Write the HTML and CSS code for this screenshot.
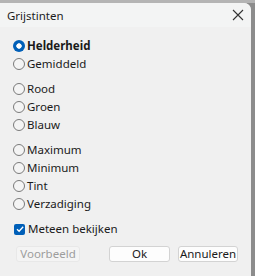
FILE: index.html
```html
<!DOCTYPE html>
<html>
<head>
<meta charset="utf-8">
<link rel="stylesheet" href="styles.css">
</head>
<body>
<div class="window">
  <div class="titlebar">
    <span class="title">Grijstinten</span>
    <svg class="close" width="12" height="12" viewBox="0 0 12 12"><path d="M1 1L11 11M11 1L1 11" stroke="#333" stroke-width="1.1" fill="none"/></svg>
  </div>
  <div class="content">
    <div class="group">
      <label class="opt"><span class="radio on"></span><span class="bold">Helderheid</span></label>
      <label class="opt"><span class="radio"></span>Gemiddeld</label>
    </div>
    <div class="group">
      <label class="opt"><span class="radio"></span>Rood</label>
      <label class="opt"><span class="radio"></span>Groen</label>
      <label class="opt"><span class="radio"></span>Blauw</label>
    </div>
    <div class="group">
      <label class="opt"><span class="radio"></span>Maximum</label>
      <label class="opt"><span class="radio"></span>Minimum</label>
      <label class="opt"><span class="radio"></span>Tint</label>
      <label class="opt"><span class="radio"></span>Verzadiging</label>
    </div>
    <label class="opt check-row"><span class="check"><svg width="10" height="10" viewBox="0 0 10 10"><path d="M2 5.2L4.1 7.3L8.2 2.8" stroke="#fff" stroke-width="1.3" fill="none"/></svg></span>Meteen bekijken</label>
    <div class="buttons">
      <button class="btn disabled">Voorbeeld</button>
      <span class="spacer"></span>
      <button class="btn">Ok</button>
      <button class="btn last">Annuleren</button>
    </div>
  </div>
</div>
</body>
</html>
```
FILE: styles.css
```css
html, body {
  margin: 0;
  padding: 0;
}
body {
  width: 255px;
  height: 276px;
  overflow: hidden;
  font-family: "Noto Sans", "Open Sans", sans-serif;
  font-size: 11.5px;
  color: #1a1a1a;
  padding-top: 3px;
  box-sizing: border-box;
  background: linear-gradient(to bottom, #b4b4b4 0, #b4b4b4 3px, #8c8c8c 3px);
}
.window {
  width: 251px;
  height: 273px;
  background: #f0f0f0;
  border-top-right-radius: 7px;
  overflow: hidden;
}
.titlebar {
  height: 24px;
  display: flex;
  align-items: center;
  justify-content: space-between;
  padding: 0 7px 0 7px;
  background: #f3f4f4;
}
.title {
  font-size: 11.5px;
  color: #1c1c1c;
}
.content {
  padding: 10px 0 0 13px;
}
.group {
  display: flex;
  flex-direction: column;
  margin-bottom: 7px;
}
.opt {
  display: flex;
  align-items: center;
  height: 18px;
  gap: 2px;
  line-height: 18px;
}
.bold {
  font-weight: bold;
}
.radio {
  width: 10px;
  height: 10px;
  border: 1px solid #7a7a7a;
  border-radius: 50%;
  background: #f4f4f4;
  flex: none;
}
.radio.on {
  border: none;
  width: 12px;
  height: 12px;
  background: radial-gradient(circle, #fff 0, #fff 2.4px, #005fb8 3px);
}
.check-row {
  margin-top: 1px;
  gap: 3px;
  padding-left: 1px;
}
.check {
  width: 11px;
  height: 11px;
  border-radius: 2px;
  background: #005fb8;
  display: flex;
  align-items: center;
  justify-content: center;
  flex: none;
}
.buttons {
  display: flex;
  margin-top: 8px;
  padding-left: 3px;
  width: 222px;
}
.spacer {
  flex: 1;
}
.btn {
  font-family: inherit;
  font-size: 11.5px;
  height: 16px;
  width: 61px;
  padding: 0;
  background: #fdfdfd;
  border: 1px solid #d3d3d3;
  border-radius: 3px;
  color: #1a1a1a;
  line-height: 14px;
}
.btn.last {
  margin-left: 8px;
  width: 60px;
}
.btn.disabled {
  width: 64px;
  background: #f4f4f4;
  border-color: #e8e8e8;
  color: #9d9d9d;
}
```
